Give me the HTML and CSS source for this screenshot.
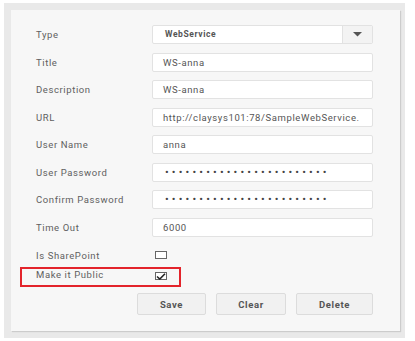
FILE: index.html
```html
<!DOCTYPE html>
<html lang="en">
<head>
    <meta charset="UTF-8">
    <link rel="stylesheet" href="styles.css">
    <title>Data Source</title>
</head>
<body>
    <div class="frame">
        <div class="panel">
            <div class="row">
                <label>Type</label>
                <div class="select">
                    <span class="select-value">WebService</span>
                    <span class="select-arrow">
                        <svg width="9" height="5" viewBox="0 0 9 5"><path d="M0 0 H9 L4.5 4.5 Z" fill="#555"/></svg>
                    </span>
                </div>
            </div>
            <div class="row">
                <label>Title</label>
                <div class="field">WS-anna</div>
            </div>
            <div class="row">
                <label>Description</label>
                <div class="field">WS-anna</div>
            </div>
            <div class="row">
                <label>URL</label>
                <div class="field">http://claysys101:78/SampleWebService.</div>
            </div>
            <div class="row">
                <label>User Name</label>
                <div class="field">anna</div>
            </div>
            <div class="row">
                <label>User Password</label>
                <div class="field dots">&bull;&bull;&bull;&bull;&bull;&bull;&bull;&bull;&bull;&bull;&bull;&bull;&bull;&bull;&bull;&bull;&bull;&bull;&bull;&bull;&bull;&bull;&bull;&bull;</div>
            </div>
            <div class="row">
                <label>Confirm Password</label>
                <div class="field dots">&bull;&bull;&bull;&bull;&bull;&bull;&bull;&bull;&bull;&bull;&bull;&bull;&bull;&bull;&bull;&bull;&bull;&bull;&bull;&bull;&bull;&bull;&bull;&bull;</div>
            </div>
            <div class="row">
                <label>Time Out</label>
                <div class="field">6000</div>
            </div>

            <div class="check-row">
                <label>Is SharePoint</label>
                <span class="checkbox"></span>
            </div>
            <div class="check-row highlight">
                <label>Make it Public</label>
                <span class="checkbox">
                    <svg width="10" height="7" viewBox="0 0 10 7"><path d="M1 3.5 L3.8 6 L9 0.8" fill="none" stroke="#222" stroke-width="1.6"/></svg>
                </span>
            </div>

            <div class="buttons">
                <button class="btn btn-save">Save</button>
                <button class="btn btn-clear">Clear</button>
                <button class="btn btn-delete">Delete</button>
            </div>
        </div>
    </div>
</body>
</html>
```

FILE: styles.css
```css
body {
    margin: 0;
    background-color: #fff;
    font-family: Roboto, 'Liberation Sans', sans-serif;
    color: #5a5a5a;
}

.frame {
    margin: 3px 0 0 4px;
    width: 389px;
    height: 321px;
    padding: 7px 5px 7px 7px;
    background-color: #e9e9e9;
}

.panel {
    height: 321px;
    box-sizing: border-box;
    padding: 15px 27px 0 25px;
    background-color: #f7f7f7;
    box-shadow: 1px 1px 1px rgba(0, 0, 0, 0.12);
    display: flex;
    flex-direction: column;
}

.row {
    display: flex;
    align-items: center;
    height: 19px;
    margin-bottom: 8.5px;
}

label {
    width: 116px;
    flex-shrink: 0;
    font-size: 9.5px;
    letter-spacing: 0.6px;
    color: #606060;
}

.field,
.select {
    flex: 1;
    height: 19px;
    box-sizing: border-box;
    background-color: #fff;
    border: 1px solid #e2e2e2;
    border-radius: 2px;
    padding-left: 10px;
    font-size: 9.5px;
    letter-spacing: 0.6px;
    line-height: 17px;
    color: #555;
    white-space: nowrap;
    overflow: hidden;
}

.dots {
    font-size: 11px;
    letter-spacing: 3.15px;
    color: #444;
    padding-left: 12px;
}

.select {
    display: flex;
    padding-left: 0;
}

.select-value {
    flex: 1;
    padding-left: 12px;
    font-size: 8.5px;
    font-weight: bold;
    color: #555;
}

.select-arrow {
    width: 29px;
    border-left: 1px solid #e2e2e2;
    background-color: #f3f3f3;
    display: flex;
    align-items: center;
    justify-content: center;
}

.check-row {
    display: flex;
    align-items: center;
    height: 14px;
    margin-top: 3px;
}

.checkbox {
    width: 12px;
    height: 8px;
    box-sizing: border-box;
    border: 1px solid #666;
    background-color: #fff;
    margin-left: 3px;
    display: flex;
    align-items: center;
    justify-content: center;
}

.highlight {
    align-items: flex-start;
    margin: 5px 0 0 -16px;
    width: 161px;
    height: 20px;
    box-sizing: border-box;
    border: 2px solid #e3242b;
    padding: 0 0 0 14px;
}

.highlight label {
    line-height: 11px;
}

.highlight .checkbox {
    margin-top: 3px;
}

.buttons {
    display: flex;
    justify-content: flex-end;
    gap: 10px;
    margin-top: 6px;
}

.btn {
    height: 22px;
    font-family: Roboto, 'Liberation Sans', sans-serif;
    font-size: 9.5px;
    font-weight: bold;
    letter-spacing: 0.6px;
    color: #555;
    background-color: #f1f1f1;
    border: 1px solid #dcdcdc;
    border-radius: 2px;
    padding: 0;
}

.btn-save { width: 69px; }
.btn-clear { width: 70px; }
.btn-delete { width: 77px; }
```
